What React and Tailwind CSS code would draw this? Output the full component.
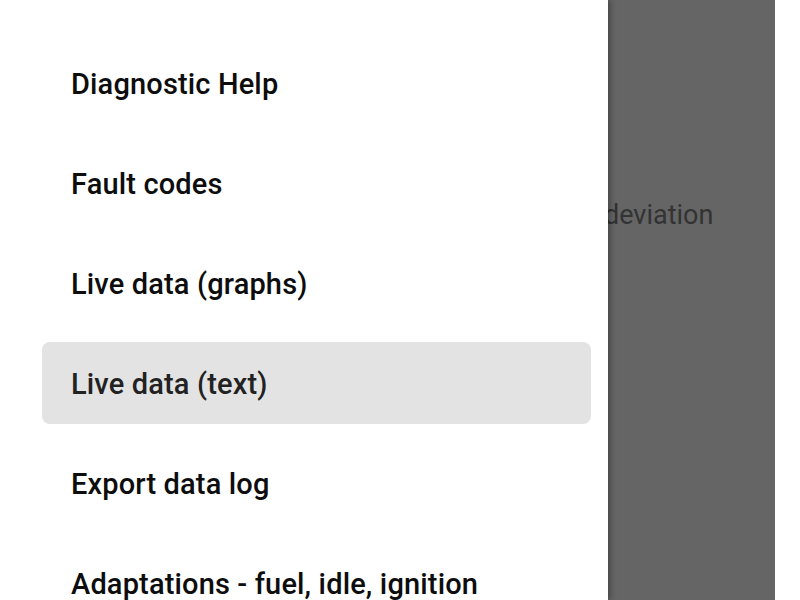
import React from "react";

const items = [
  "Diagnostic Help",
  "Fault codes",
  "Live data (graphs)",
  "Live data (text)",
  "Export data log",
  "Adaptations - fuel, idle, ignition",
];

export default function App() {
  return (
    <div
      className="flex h-[600px] w-[800px] overflow-hidden bg-white"
      style={{ fontFamily: "Roboto, 'Noto Sans', sans-serif" }}
    >
      <div className="relative z-10 h-full w-[608px] shrink-0 bg-white shadow-[2px_0_6px_rgba(0,0,0,0.35)]">
        <div className="flex flex-col gap-[18px] px-[42px] pt-[42px] pr-[17px]">
          {items.map((t, i) => (
            <div
              key={t}
              className={
                "flex h-[82px] shrink-0 items-center rounded-[8px] pl-[29px] pt-[4px] text-[29px] font-medium tracking-[0.15px] " +
                (i === 3 ? "bg-[#e3e3e3] text-[#222222]" : "text-[#0d0d0d]")
              }
            >
              {t}
            </div>
          ))}
        </div>
      </div>
      <div className="h-full w-[167px] shrink-0 bg-[#656565]">
        <div className="ml-[-4px] pt-[195px] text-[27px] text-[#333333]">deviation</div>
      </div>
      <div className="h-full flex-1 bg-white" />
    </div>
  );
}
